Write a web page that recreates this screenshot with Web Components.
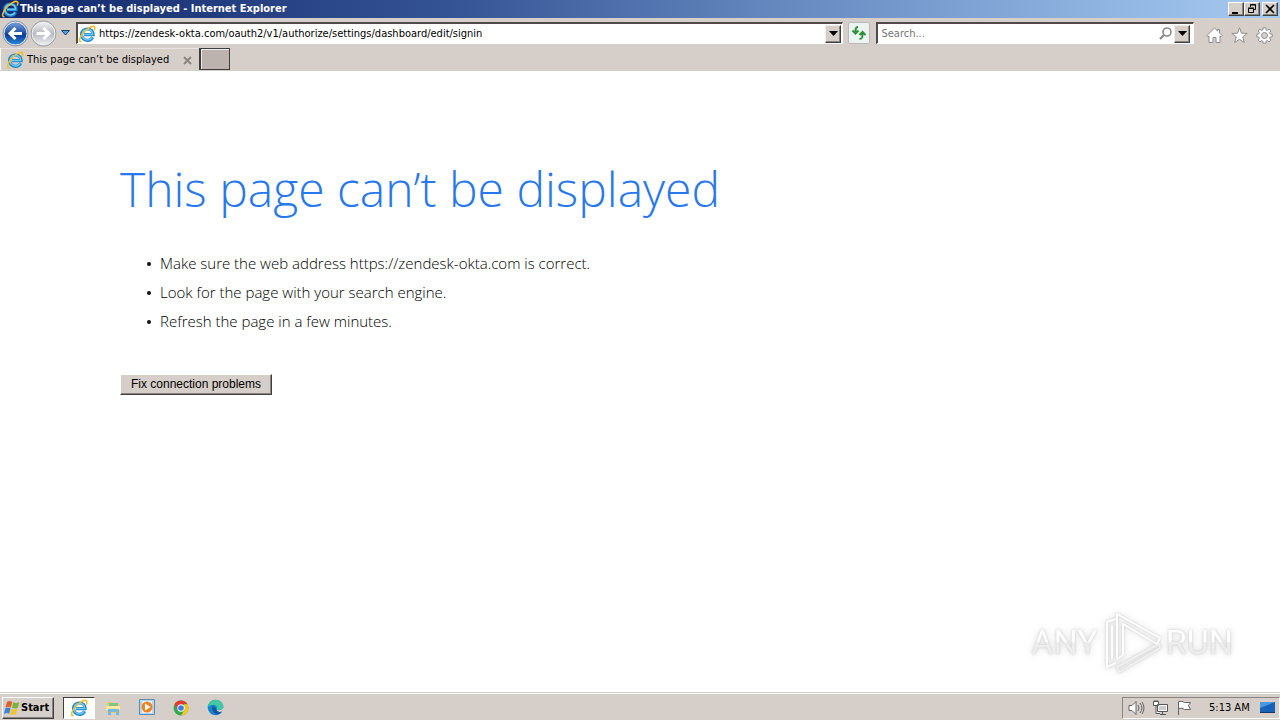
<!DOCTYPE html>
<html lang="en">
<head>
<meta charset="utf-8">
<title>This page can’t be displayed - Internet Explorer</title>
<style>
html,body{margin:0;min-height:100%}
body{font:11px/14px "DejaVu Sans Condensed","DejaVu Sans",sans-serif;color:#000;background:#fff;--face:#d6cfc9}
</style>
</head>
<body>
<desktop-screen></desktop-screen>
<script>
const define = (name, css, html) => customElements.define(name, class extends HTMLElement {
  constructor() {
    super();
    const t = document.createElement('template');
    t.innerHTML = `<style>*{box-sizing:border-box}svg{display:block;flex:none}button{font:inherit;color:inherit;margin:0}${css}</style>${html}`;
    this.attachShadow({mode: 'open'}).append(t.content.cloneNode(true));
  }
});

define('ie-logo', ':host{display:block;flex:none;width:18px;height:18px}svg{width:100%;height:100%}', `
<svg viewBox="0 0 18 18" fill="none" aria-hidden="true">
<path d="M14.6 12.2C13.400 14.400 11.500 15.400 9.300 15.300 5.900 15.200 3.500 12.800 3.600 9.500 3.700 6.200 6.200 4 9.400 4c3.600 0 5.700 2.300 5.700 5.700H6" stroke="#1f83c9" stroke-width="3.200"/>
<path d="M14 12.500C13 14.100 11.500 15 9.300 14.900 6.200 14.800 4 12.600 4.100 9.500 4.200 6.500 6.400 4.500 9.400 4.500c3.200 0 5.200 2 5.200 4.900H6" stroke="#6cc9f2" stroke-width="1.500"/>
<path d="M3.500 16.800C.2 17 1.500 12.500 5 8.300 9 3.400 14.500.3 16.300 1.800c1 .8.600 2.300-.2 3.800" stroke="#f0bd2d" stroke-width="1.600"/>
</svg>`);

define('caption-button', `:host{display:block;flex:none}
button{display:grid;place-items:center;width:16px;height:14px;padding:0;background:var(--face);border:1px solid;border-color:#fff #404040 #404040 #fff;box-shadow:inset -1px -1px #8a8580}`,
`<button><slot></slot></button>`);

define('title-bar', `:host{display:flex;align-items:center;height:18px;padding:0 2px 0 1px;background:linear-gradient(90deg,#12296c,#345394 35%,#6285bd 59%,#8fb4e1 86%,#a6caf0);color:#fff;font-weight:700}
h1{font:inherit;margin:0 0 0 1px;flex:1;white-space:nowrap}caption-button:last-child{margin-left:2px}`, `
<ie-logo></ie-logo><h1>This page can’t be displayed - Internet Explorer</h1>
<caption-button aria-label="Minimize"><svg width="12" height="10"><path d="M2 8h6v2H2z"/></svg></caption-button>
<caption-button aria-label="Restore"><svg width="12" height="10" fill="none" stroke="#000"><path d="M4.500 3V.5h5v5H8M4 1h6M2.500 4.500h5v4h-5zM2 4h6"/></svg></caption-button>
<caption-button aria-label="Close"><svg width="12" height="10" stroke="#000" stroke-width="1.600"><path d="m2 1 8 8m0-8L2 9"/></svg></caption-button>`);

define('drop-arrow', `:host{display:block;flex:none}button{display:grid;place-items:center;width:16px;height:18px;padding:0;background:var(--face);border:1px solid;border-color:#eee #404040 #404040 #eee;box-shadow:inset -1px -1px #8a8580}`,
`<button aria-label="Show list"><svg width="9" height="5"><path d="M0 0h9L4.500 5z"/></svg></button>`);

define('sunken-field', `:host{display:flex;align-items:center;height:22px;min-width:0;background:#fff;border:solid;border-width:2px 1px 1px 2px;border-color:#504a4a #fff #fff #504a4a;padding:0 1px}`, `<slot></slot>`);

define('nav-bar', `:host{display:flex;align-items:center;height:30px;padding:0 7px 0 2px;background:var(--face)}
button{padding:0;border:0;background:none;flex:none}
input{flex:1;min-width:0;border:0;outline:0;padding:0;margin:0;background:none;font:inherit;color:#000}
input::placeholder{color:#757575;opacity:1}
.address{flex:772 1 0;margin-left:6px;padding:0 1px 0 0}.address ie-logo{margin-right:3px}
.search{flex:312 1 0;padding:0 3px}
.reload{display:grid;place-items:center;width:22px;height:22px;margin:0 6px 0 5px;border:1px solid #b9b9b9;border-radius:2px;background:#edf3f3}
.tools{display:flex;gap:8px;margin-left:12px}.forward{margin-left:1px}.recent{margin-left:4px}.search svg{margin-right:1px}.tools svg{position:relative;top:2px}`, `
<button aria-label="Back"><svg width="27" height="27" viewBox="0 0 27 27"><defs><linearGradient id="b" x2="0" y2="1"><stop stop-color="#7aa1d7"/><stop offset=".45" stop-color="#2458ad"/><stop offset=".55" stop-color="#0b3a94"/><stop offset="1" stop-color="#2a8ce0"/></linearGradient></defs><circle cx="13.500" cy="13.500" r="11.500" fill="url(#b)" stroke="#e6eaf0"/><circle cx="13.500" cy="13.500" r="12.500" fill="none" stroke="#8794a9"/><path d="M20 13.500H8m5.500-5.500L8 13.500l5.500 5.500" fill="none" stroke="#fff" stroke-width="3"/></svg></button>
<button class="forward" aria-label="Forward"><svg width="27" height="27" viewBox="0 0 27 27"><defs><linearGradient id="f" x2="0" y2="1"><stop stop-color="#f2f2f2"/><stop offset=".5" stop-color="#b8bbc0"/><stop offset="1" stop-color="#eee"/></linearGradient></defs><circle cx="13.500" cy="13.500" r="11.500" fill="url(#f)" stroke="#f5f5f5"/><circle cx="13.500" cy="13.500" r="12.500" fill="none" stroke="#9aa0a8"/><path d="M6.500 13.500h12M13.500 8l5.500 5.500-5.500 5.500" fill="none" stroke="#fff" stroke-width="3"/></svg></button>
<button class="recent" aria-label="Recent pages"><svg width="9" height="6"><path d="M.5.5h8L4.500 5z" fill="#4aa3dc" stroke="#173e6e"/></svg></button>
<sunken-field class="address"><ie-logo></ie-logo><input aria-label="Address" value="https://zendesk-okta.com/oauth2/v1/authorize/settings/dashboard/edit/signin"><drop-arrow></drop-arrow></sunken-field>
<button class="reload" aria-label="Refresh"><svg width="16" height="16" fill="none" stroke="#2b9233" stroke-width="2"><path d="M7 2C4.500 2 4.500 4 4.500 8M1.500 5.500l3 3 3-3M8.500 14c3 0 3-2 3-6M8.500 10l3-3 3 3"/></svg></button>
<sunken-field class="search"><input aria-label="Search" placeholder="Search..."><svg width="15" height="15" fill="none" stroke="#888"><circle cx="9" cy="6" r="4" stroke-width="1.600"/><path d="m6 9-4 4" stroke-width="2.200"/></svg><drop-arrow></drop-arrow></sunken-field>
<div class="tools">
<button aria-label="Home"><svg width="17" height="17" fill="#fff" stroke="#8d8d8d"><path d="M8.500 1 .8 8.600l1.200 1.200 1-.9V15.500h4v-5h3v5h4V8.900l1 .9 1.200-1.200-2.700-2.700V2.500h-2v1.400z"/></svg></button>
<button aria-label="Favorites"><svg width="17" height="17" fill="#fff" stroke="#8d8d8d"><path d="m8.500.8 2 5.400 5.700.2-4.500 3.500 1.600 5.600-4.800-3.200-4.800 3.200 1.600-5.600L.8 6.400l5.700-.2z"/></svg></button>
<button aria-label="Tools"><svg width="17" height="17" viewBox="0 0 17 17" fill="#fff" stroke="#8d8d8d"><path d="m7.200.8h2.600l.3 2 1.300.6L13 2.100l1.900 1.900-1.300 1.600.6 1.300 2 .3v2.600l-2 .3-.6 1.300 1.300 1.600L13 14.900l-1.600-1.300-1.300.6-.3 2H7.200l-.3-2-1.300-.6L4 14.900 2.100 13l1.300-1.600-.6-1.300-2-.3V7.200l2-.3.6-1.300L2.100 4 4 2.100l1.600 1.300 1.300-.6z"/><circle cx="8.500" cy="8.500" r="3" fill="#d6cfc9"/></svg></button>
</div>`);

define('tab-strip', `:host{display:flex;height:23px;padding-bottom:1px;background:var(--face)}
.tab{display:flex;align-items:center;width:199px;padding:1px 7px 0 5px;border-left:1px solid #fff;border-top:1px solid #e7e3e0;white-space:nowrap}
.tab span{flex:1;margin-left:3px}button{padding:0;background:none;border:0}
.new{width:31px;height:22px;background:#bcb3ae;border:solid #403c3c;border-width:1px 1px 1px 2px;box-shadow:inset 1px 1px #eee}`, `
<div class="tab"><ie-logo></ie-logo><span>This page can’t be displayed</span><button aria-label="Close tab"><svg width="9" height="9" stroke="#8b8580" stroke-width="2"><path d="m1 1 7 7m0-7L1 8"/></svg></button></div>
<button class="new" aria-label="New tab"></button>`);

define('error-page', `:host{display:block;flex:1;padding:89px 120px 0;font-family:"Open Sans","Noto Sans",sans-serif;font-weight:300}
h2{margin:0;font-size:48px;line-height:58px;font-weight:300;color:#2778ec}
ul{margin:31px 0 0;padding:0 0 0 40px;list-style:none;font-size:15px;line-height:29px}
li{display:flex;align-items:center}li::before{content:"";width:4px;height:4px;border-radius:2px;background:#111;margin:0 9px 0 -13px}
button{display:block;margin:38px 0 0;height:21px;width:152px;padding:0;font:12px/17px "Liberation Sans",sans-serif;background:var(--face);border:1px solid;border-color:#fff #404040 #404040 #fff;box-shadow:inset -1px -1px #8a8580}`, `
<h2>This page can’t be displayed</h2>
<ul><li>Make sure the web address https://zendesk-okta.com is correct.</li><li>Look for the page with your search engine.</li><li>Refresh the page in a few minutes.</li></ul>
<button>Fix connection problems</button>`);

define('any-run', `:host{position:absolute;right:47px;bottom:18px;display:flex;align-items:center;gap:4px;font:34px/64px "Roboto",sans-serif;color:#fff;filter:drop-shadow(0 0 1px #ccc) drop-shadow(0 0 3px #ddd)}
span{background:linear-gradient(#fff 50%,#ededed 50%);-webkit-background-clip:text;background-clip:text;color:transparent}`, `
<span>ANY</span><svg width="60" height="64" fill="none" stroke="#fff" stroke-width="2" stroke-linejoin="round"><path d="M14 9 5 12v45l9-4M10 15v34"/><path d="M15 49V4l43 24-3 6-34-20v31z"/><path d="M15 57 57 34l1 4-41 24z" stroke="#f0f0f0"/></svg><span>RUN</span>`);

define('start-button', `:host{display:block}button{display:flex;align-items:center;height:22px;width:52px;padding:0 1px;background:var(--face);border:1px solid;border-color:#fff #404040 #404040 #fff;box-shadow:inset -1px -1px #8a8580;font-weight:700}`, `
<button><svg width="17" height="16" viewBox="0 0 17 16"><path d="M3 2c2-1.500 3.500-1 5.300 0L6.800 7.400c-1.700-1-3-1-5.300 0z" fill="#e3602c"/><path d="M9.300 2.300c1.800 1 3.500 1 6 0l-1.500 5.500c-1.700 1-3.900 1-5.800 0z" fill="#75b53b"/><path d="M1.200 8.400c2-1.300 3.500-1 5.300 0l-1.300 5.300c-1.600-1-3.200-1-5.200.2z" fill="#3f84cf"/><path d="M7.500 8.700c1.700 1 3.800 1 6 0l-1.500 5.500c-1.800 1-3.900.8-5.800-.2z" fill="#f4c32e"/></svg><span>Start</span></button>`);

define('task-bar', `:host{display:flex;align-items:center;flex:none;height:28px;padding:2px 0 0 2px;background:var(--face);border-top:1px solid var(--face);box-shadow:inset 0 1px #fff}
.apps{display:flex;align-items:center;margin-left:9px;flex:1}
.apps button{display:grid;place-items:center;width:34px;height:22px;padding:0;border:0;background:none}
.apps .on{width:32px;margin-right:1px;background:#fff;border:1px solid;border-color:#404040 #fff #fff #404040}
.tray{display:flex;align-items:center;gap:7px;height:22px;width:158px;padding:0 3px 0 5px;border:1px solid;border-color:#8a8580 #fff #fff #8a8580}
time{margin-left:9px;flex:1;white-space:nowrap}`, `
<start-button></start-button>
<div class="apps">
<button class="on" aria-label="Internet Explorer"><ie-logo></ie-logo></button>
<button aria-label="Explorer"><svg width="17" height="16"><path d="M2 2h5l1 2h7v9H2z" fill="#eacb6b"/><path d="M4 3h9v5H4z" fill="#83c485"/><path d="M1 6h14v4H1z" fill="#fae9a5"/><path d="M3 15V9h11v6h-3v-3H6v3z" fill="#74b9e2"/></svg></button>
<button aria-label="Media Player"><svg width="17" height="17"><path d="M.5.500h15v15H.5z" fill="#b7d6ef" stroke="#568cb9"/><path d="M3 2h10v12H3z" fill="#e9f3fb"/><circle cx="8" cy="8" r="5.500" fill="#ee8420"/><path d="m6 4.500 5.500 3.500L6 11.500z" fill="#fff"/></svg></button>
<button aria-label="Chrome"><svg width="16" height="16" viewBox="0 0 16 16"><circle cx="8" cy="8" r="7.500" fill="#36a852"/><path d="M1.500 4.250A7.500 7.500 0 0 1 14.500 4.250H8L4.800 9.900z" fill="#e23b30"/><path d="M14.500 4.250A7.500 7.500 0 0 1 8 15.500L11.250 9.900 11 4.250z" fill="#f9c51c"/><circle cx="8" cy="8" r="3.700" fill="#fff"/><circle cx="8" cy="8" r="2.800" fill="#397ee8"/></svg></button>
<button aria-label="Edge"><svg width="17" height="17" viewBox="0 0 17 17"><circle cx="8.500" cy="8.500" r="7.800" fill="#1484ce"/><path d="M.8 8C2 3 5 .7 8.500.7c4.500 0 7.800 3.300 7.800 6.600 0 2.500-2 4-4.500 4-2 0-2.700-.8-2-1.700C10.500 7.500 9 6 6.500 6 4 6 2 6.500.8 8z" fill="#42c9a4"/><path d="M6 7c-1.500 2-1 6 3.500 8.300 2.500.2 4.800-1.300 5.800-3.300-3 1.500-6 .5-6-2.500z" fill="#1255a4"/><path d="M9.800 9.600c-.7.900 0 1.700 2 1.700 2.300 0 4-1 4.400-2.800l.8 2-2 2c-3 1-5.700 0-5.200-2.900z" fill="#d6cfc9"/></svg></button>
</div>
<div class="tray">
<svg width="17" height="16" fill="#fff" stroke="#666"><path d="M1 5.500h3l4-4v13l-4-4H1z"/><path d="M10 5q2 3 0 6m2-8q4 5 0 10m2-11q4 6 0 12" fill="none"/></svg>
<svg width="17" height="16" fill="#fff" stroke="#555"><path d="M5.500 4.500h10v7h-10zM8 14.500h6M10.500 12v2M1.500 1.500h5v4h-5zM3 0v2m2-2v2M4 6v7.500h4" /><path d="M7 6h7v4H7z" fill="#ccc" stroke="none"/></svg>
<svg width="17" height="16" fill="#fff" stroke="#666"><path d="M2.500 15V1.500q4-1 6 1h6l-2 3 2 4h-6q-2-2-6-1"/></svg>
<time>5:13 AM</time>
<svg width="17" height="16"><path d="M1 2h15v10H1z" fill="#1763b9"/><path d="M1 2h15L1 8z" fill="#4c97df"/><path d="M1 12h15v1H1z" fill="#173864"/></svg>
</div>`);

define('desktop-screen', ':host{display:flex;flex-direction:column;min-height:100vh}main{flex:1;display:flex;position:relative}', `
<title-bar></title-bar><nav-bar></nav-bar><tab-strip></tab-strip><main><error-page></error-page><any-run></any-run></main><task-bar></task-bar>`);
</script>
</body>
</html>
